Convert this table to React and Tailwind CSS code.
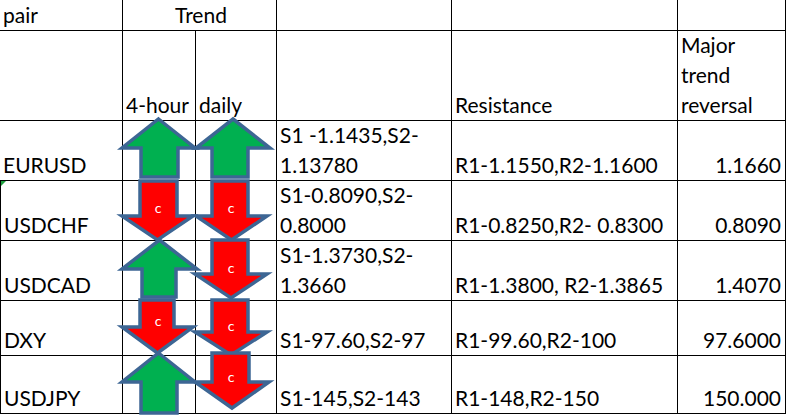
import React from "react";

const STROKE = "#3d6694";
const GREEN = "#00b050";
const RED = "#ff0000";

function upArrow(x, y, w, h, headH, sx1, sx2) {
  const apex = x + w / 2;
  const wy = y + headH;
  return `${apex},${y} ${x + w},${wy} ${sx2},${wy} ${sx2},${y + h} ${sx1},${y + h} ${sx1},${wy} ${x},${wy}`;
}

function downArrow(x, y, w, h, bodyH, sx1, sx2) {
  const apex = x + w / 2;
  const wy = y + bodyH;
  return `${sx1},${y} ${sx2},${y} ${sx2},${wy} ${x + w},${wy} ${apex},${y + h} ${x},${wy} ${sx1},${wy}`;
}

const arrows = [
  { t: "up", pts: upArrow(122, 119, 73, 58, 29, 141, 178) },
  { t: "up", pts: upArrow(196, 119, 74, 58, 29, 212, 248) },
  { t: "down", pts: downArrow(122, 181, 71, 59, 35, 140, 177), c: [158, 208] },
  { t: "down", pts: downArrow(196, 181, 71, 59, 35, 212, 248), c: [231, 208] },
  { t: "up", pts: upArrow(122, 240, 75, 57, 29, 142, 176) },
  { t: "down", pts: downArrow(195, 240, 72, 58, 34, 212, 248), c: [231, 268] },
  { t: "down", pts: downArrow(122, 300, 71, 53, 27, 140, 174), c: [158, 321] },
  { t: "down", pts: downArrow(195, 300, 72, 55, 32, 212, 248), c: [231, 326] },
  { t: "up", pts: upArrow(122, 353, 73, 60, 29, 141, 177) },
  { t: "down", pts: downArrow(195, 353, 74, 55, 29, 212, 249), c: [231, 377] },
];

const rows = [
  { pair: "EURUSD", s: ["S1 -1.1435,S2-", "1.13780"], r: "R1-1.1550,R2-1.1600", m: "1.1660", h: "h-[60px]" },
  { pair: "USDCHF", s: ["S1-0.8090,S2-", "0.8000"], r: "R1-0.8250,R2- 0.8300", m: "0.8090", h: "h-[60px]" },
  { pair: "USDCAD", s: ["S1-1.3730,S2-", "1.3660"], r: "R1-1.3800, R2-1.3865", m: "1.4070", h: "h-[60px]" },
  { pair: "DXY", s: ["S1-97.60,S2-97"], r: "R1-99.60,R2-100", m: "97.6000", h: "h-[55px]" },
  { pair: "USDJPY", s: ["S1-145,S2-143"], r: "R1-148,R2-150", m: "150.000", h: "h-[58px]" },
];

const cell = "flex flex-col justify-end border-r border-b border-black pl-[3px] whitespace-pre";

export default function App() {
  return (
    <div
      className="relative w-[786px] h-[415px] bg-white overflow-hidden text-black text-[21px] leading-[30px]"
      style={{ fontFamily: "Lato, 'Open Sans', sans-serif" }}
    >
      <div className="flex flex-col">
        {/* header row 1 */}
        <div className="flex h-[31px]">
          <div className={`${cell} w-[123px]`}>pair</div>
          <div className={`${cell} w-[154px] items-center pl-0`}>Trend</div>
          <div className={`${cell} w-[175px]`}></div>
          <div className={`${cell} w-[226px]`}></div>
          <div className={`${cell} w-[108px]`}></div>
        </div>
        {/* header row 2 */}
        <div className="flex h-[90px]">
          <div className={`${cell} w-[123px]`}></div>
          <div className={`${cell} w-[73px]`}>4-hour</div>
          <div className={`${cell} w-[81px]`}>daily</div>
          <div className={`${cell} w-[175px]`}></div>
          <div className={`${cell} w-[226px]`}>Resistance</div>
          <div className={`${cell} w-[108px]`}>
            <span>Major</span>
            <span>trend</span>
            <span>reversal</span>
          </div>
        </div>
        {rows.map((r, i) => (
          <div key={r.pair} className={`flex ${r.h}`}>
            <div className={`${cell} w-[123px] ${i > 0 ? "border-l" : ""} relative`}>
              {i === 1 && (
                <span className="absolute left-0 top-0 w-0 h-0 border-t-[5px] border-t-[#1f9f3f] border-r-[5px] border-r-transparent" />
              )}
              {r.pair}
            </div>
            <div className={`${cell} w-[73px]`}></div>
            <div className={`${cell} w-[81px]`}></div>
            <div className={`${cell} w-[175px]`}>
              {r.s.map((t) => (
                <span key={t}>{t}</span>
              ))}
            </div>
            <div className={`${cell} w-[226px]`}>{r.r}</div>
            <div className={`${cell} w-[108px] items-end pr-[4px]`}>{r.m}</div>
          </div>
        ))}
      </div>
      <svg className="absolute inset-0 pointer-events-none" width="786" height="415">
        {arrows.map((a, i) => (
          <g key={i}>
            <polygon
              points={a.pts}
              fill={a.t === "up" ? GREEN : RED}
              stroke={STROKE}
              strokeWidth="3.5"
              strokeLinejoin="miter"
            />
            {a.c && (
              <text
                x={a.c[0]}
                y={a.c[1] + 5}
                textAnchor="middle"
                fill="#ffffff"
                fontSize="14"
                fontFamily="Lato, sans-serif"
              >
                c
              </text>
            )}
          </g>
        ))}
      </svg>
    </div>
  );
}
